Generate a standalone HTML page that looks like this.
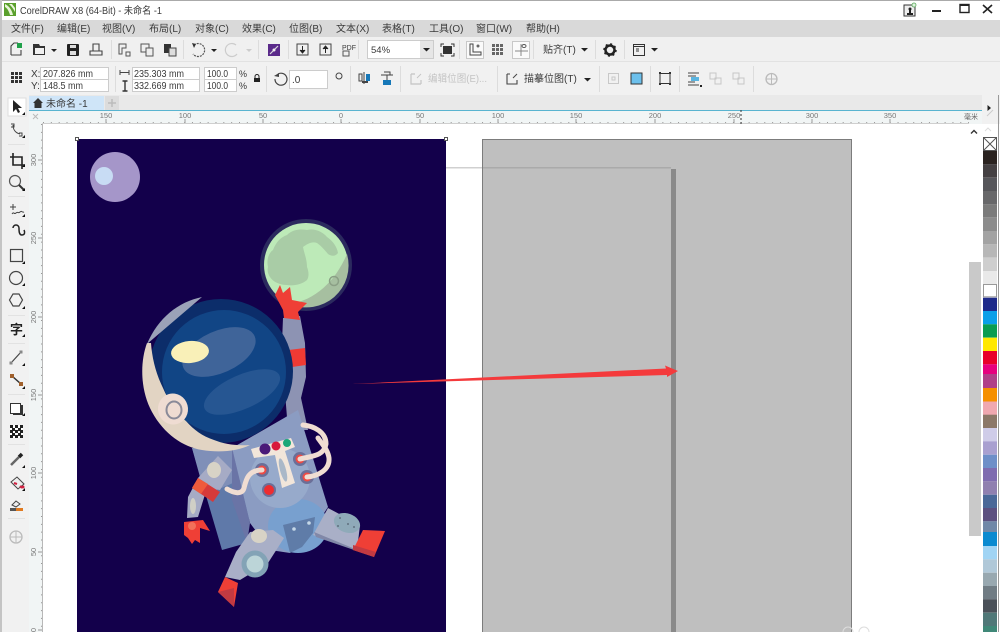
<!DOCTYPE html>
<html><head><meta charset="utf-8"><style>
html,body{margin:0;padding:0;background:#fff;width:1000px;height:632px;overflow:hidden}
svg{display:block;filter:blur(.35px)}
text{font-family:"Liberation Sans","Noto Sans CJK SC",sans-serif;fill:#3a3a3a}
</style></head><body>
<svg width="1000" height="632" viewBox="0 0 1000 632" xmlns="http://www.w3.org/2000/svg">
<rect width="1000" height="632" fill="#fff"/>
<!-- chrome -->
<rect x="0" y="0" width="1000" height="1" fill="#aaa"/>
<rect x="0" y="0" width="2" height="632" fill="#c4c4c4"/>
<rect x="2" y="20" width="998" height="17" fill="#d9d9d9"/>
<rect x="2" y="37" width="998" height="24" fill="#f0f0f0"/>
<rect x="2" y="61" width="998" height="1" fill="#e2e2e2"/>
<rect x="2" y="62" width="998" height="33" fill="#f1f1f1"/>
<rect x="2" y="95" width="998" height="15" fill="#e9e9e9"/>
<rect x="2" y="95" width="27" height="537" fill="#f1f1f1"/>
<!-- logo -->
<rect x="4" y="3" width="12" height="13" fill="#5aa02c"/>
<path d="M5 4 C9 6 12 10 13 15 L10 15 C9 11 7 8 5 7Z M9 4 C11 6 13 8 15 12 L15 8 L12 4Z" fill="#e8f4d8"/>
<text x="20" y="14" font-size="10" textLength="142" lengthAdjust="spacingAndGlyphs">CorelDRAW X8 (64-Bit) - 未命名 -1</text>
<!-- window controls -->
<rect x="904" y="5" width="11" height="11" fill="#eee" stroke="#333"/>
<path d="M907 14h6M910 14v-4" stroke="#222" stroke-width="2"/><circle cx="910" cy="9" r="1.500" fill="#222"/><circle cx="914" cy="5" r="2" fill="#dff3df" stroke="#5aa85a" stroke-width=".8"/>
<rect x="932" y="10" width="9" height="2" fill="#222"/>
<rect x="960" y="4.500" width="9" height="8" fill="none" stroke="#222" stroke-width="1.400"/><rect x="960" y="4" width="9" height="2" fill="#222"/>
<path d="M983 5L992 13M992 5L983 13" stroke="#222" stroke-width="1.600"/>
<!-- menu -->
<g font-size="10">
<text x="11" y="32">文件(F)</text><text x="57" y="32">编辑(E)</text><text x="102" y="32">视图(V)</text><text x="149" y="32">布局(L)</text><text x="195" y="32">对象(C)</text><text x="242" y="32">效果(C)</text><text x="289" y="32">位图(B)</text><text x="336" y="32">文本(X)</text><text x="382" y="32">表格(T)</text><text x="429" y="32">工具(O)</text><text x="476" y="32">窗口(W)</text><text x="526" y="32">帮助(H)</text>
</g>
<!-- toolbar 1 separators -->
<g fill="#dcdcdc"><rect x="111" y="40" width="1" height="19"/><rect x="183" y="40" width="1" height="19"/><rect x="258" y="40" width="1" height="19"/><rect x="288" y="40" width="1" height="19"/><rect x="358" y="40" width="1" height="19"/><rect x="459" y="40" width="1" height="19"/><rect x="533" y="40" width="1" height="19"/><rect x="595" y="40" width="1" height="19"/><rect x="624" y="40" width="1" height="19"/></g>
<!-- new -->
<path d="M11 55V46l3-3h4M11 55h10v-5" fill="none" stroke="#444" stroke-width="1.100"/><rect x="17" y="43" width="5" height="5" fill="#1fa14a"/>
<!-- open -->
<path d="M33 55V44h6l1 2h5v9Z" fill="#333"/><rect x="35" y="48" width="9" height="6" fill="#f0f0f0"/>
<path d="M51 49h6l-3 3Z" fill="#222"/>
<!-- save -->
<rect x="67" y="44" width="12" height="12" rx="1" fill="#222"/><rect x="70" y="45" width="6" height="3" fill="#ddd"/><rect x="70" y="51" width="6" height="4" fill="#ddd"/>
<!-- print -->
<path d="M90 55v-4h12v4ZM93 51v-7h6v7" fill="none" stroke="#444" stroke-width="1.100"/>
<!-- cut copy paste -->
<path d="M119 44h7v4h-4v6h-3Z" fill="none" stroke="#555"/><rect x="126" y="52" width="4" height="4" fill="none" stroke="#555"/>
<rect x="141" y="44" width="8" height="8" fill="none" stroke="#555"/><rect x="146" y="48" width="7" height="8" fill="#eee" stroke="#555"/>
<rect x="164" y="44" width="7" height="9" fill="#333"/><rect x="169" y="48" width="7" height="8" fill="#ddd" stroke="#444"/>
<!-- undo redo -->
<path d="M194 45a6.500 6.500 0 1 1 -1 9" fill="none" stroke="#555" stroke-dasharray="2 1" stroke-width="1.200"/><path d="M192 43l4 1-2 4Z" fill="#333"/>
<path d="M211 49h6l-3 3Z" fill="#222"/>
<path d="M236 45a6.500 6.500 0 1 0 1 9" fill="none" stroke="#ccc" stroke-width="1.200"/><path d="M246 49h6l-3 3Z" fill="#ccc"/>
<!-- connect -->
<rect x="268" y="44" width="12" height="12" fill="#5a2a8a"/><path d="M270 54l8-8" stroke="#ddd" stroke-width="1.200"/><circle cx="274" cy="50" r="1.500" fill="#eee"/>
<!-- import/export/pdf -->
<rect x="297" y="44" width="11" height="11" fill="none" stroke="#444"/><path d="M302.500 46v5M300 50l2.500 3 2.500-3" fill="#222" stroke="#222"/>
<rect x="320" y="44" width="11" height="11" fill="none" stroke="#444"/><path d="M325.500 53v-5M323 49l2.500-3 2.500 3" fill="#222" stroke="#222"/>
<text x="342" y="50" font-size="7">PDF</text><rect x="343" y="51" width="6" height="5" fill="none" stroke="#555"/>
<!-- zoom combo -->
<rect x="367.500" y="40.500" width="66" height="18" fill="#fff" stroke="#ccc"/><rect x="420" y="41" width="13" height="17" fill="#e6e6e6"/><path d="M423 48h7l-3.500 3.500Z" fill="#222"/>
<text x="371" y="53" font-size="9.500">54%</text>
<rect x="443" y="46" width="9" height="8" fill="#333"/><path d="M441 47v-3h3M451 44h3v3M454 53v3h-3M444 56h-3v-3" fill="none" stroke="#333"/>
<!-- layout buttons -->
<rect x="466.500" y="41.500" width="17" height="17" fill="#fafafa" stroke="#c8c8c8"/><path d="M470 44v11h11v-3h-8v-8Z" fill="none" stroke="#444"/><circle cx="478" cy="46" r="1.500" fill="#666"/>
<g fill="#666"><rect x="492" y="44" width="3" height="3"/><rect x="496" y="44" width="3" height="3"/><rect x="500" y="44" width="3" height="3"/><rect x="492" y="48" width="3" height="3"/><rect x="496" y="48" width="3" height="3"/><rect x="500" y="48" width="3" height="3"/><rect x="492" y="52" width="3" height="3"/><rect x="496" y="52" width="3" height="3"/><rect x="500" y="52" width="3" height="3"/></g>
<rect x="512.500" y="41.500" width="17" height="17" fill="#fafafa" stroke="#c8c8c8"/><path d="M515 51h13M521 44v12" stroke="#888"/><ellipse cx="524" cy="46" rx="2" ry="1.500" fill="none" stroke="#555"/>
<text x="543" y="53" font-size="10">贴齐(T)</text>
<path d="M581 48h7l-3.500 3.500Z" fill="#222"/>
<!-- gear -->
<circle cx="610" cy="50" r="4.500" fill="none" stroke="#222" stroke-width="2.500"/><circle cx="610" cy="50" r="6" fill="none" stroke="#222" stroke-width="1.500" stroke-dasharray="2 2.700"/>
<rect x="633.500" y="44.500" width="11" height="11" fill="none" stroke="#333"/><path d="M634 46.500h10M636 49h3M636 51h3" stroke="#333"/>
<path d="M651 48h7l-3.500 3.500Z" fill="#222"/>
<!-- row 2 -->
<g fill="#333"><rect x="11" y="72" width="3" height="3"/><rect x="15" y="72" width="3" height="3"/><rect x="19" y="72" width="3" height="3"/><rect x="11" y="76" width="3" height="3"/><rect x="15" y="76" width="3" height="3"/><rect x="19" y="76" width="3" height="3"/><rect x="11" y="80" width="3" height="3"/><rect x="15" y="80" width="3" height="3"/><rect x="19" y="80" width="3" height="3"/></g>
<g fill="#fff" stroke="#ccc"><rect x="40.500" y="67.500" width="68" height="12"/><rect x="40.500" y="79.500" width="68" height="12"/><rect x="132.500" y="67.500" width="67" height="12"/><rect x="132.500" y="79.500" width="67" height="12"/><rect x="204.500" y="67.500" width="32" height="12"/><rect x="204.500" y="79.500" width="32" height="12"/><rect x="289.500" y="70.500" width="38" height="18"/></g>
<g font-size="10">
<text x="31" y="77">X:</text><text x="31" y="89">Y:</text>
<text x="43" y="77" textLength="50" lengthAdjust="spacingAndGlyphs">207.826 mm</text><text x="43" y="89" textLength="40" lengthAdjust="spacingAndGlyphs">148.5 mm</text>
<text x="134" y="77" textLength="50" lengthAdjust="spacingAndGlyphs">235.303 mm</text><text x="134" y="89" textLength="50" lengthAdjust="spacingAndGlyphs">332.669 mm</text>
<text x="207" y="77" textLength="21" lengthAdjust="spacingAndGlyphs">100.0</text><text x="207" y="89" textLength="21" lengthAdjust="spacingAndGlyphs">100.0</text>
<text x="239" y="77" font-size="9">%</text><text x="239" y="89" font-size="9">%</text>
<text x="292" y="83" font-size="10">.0</text>
</g>
<path d="M120 72.500h9M120 70v5M129 70v5" stroke="#444" fill="none"/>
<path d="M125 81v10M122.500 81h5M122.500 91h5" stroke="#333" stroke-width="1.400" fill="none"/>
<rect x="254" y="78" width="6" height="4" fill="#222"/><path d="M255 78v-1.500a2 2 0 0 1 4 0V78" fill="none" stroke="#222"/>
<path d="M278 74a6 6 0 1 1 -3 5" fill="none" stroke="#444" stroke-width="1.200"/><path d="M274 76l5-3v4Z" fill="#444"/>
<circle cx="339" cy="76" r="3" fill="none" stroke="#444"/>
<g fill="#dcdcdc"><rect x="350" y="66" width="1" height="26"/><rect x="400" y="66" width="1" height="26"/><rect x="497" y="66" width="1" height="26"/><rect x="599" y="66" width="1" height="26"/><rect x="650" y="66" width="1" height="26"/><rect x="679" y="66" width="1" height="26"/><rect x="753" y="66" width="1" height="26"/><rect x="115" y="66" width="1" height="26"/><rect x="266" y="66" width="1" height="26"/></g>
<!-- mirror -->
<path d="M359 74h3v7h-3ZM364 72v12" fill="none" stroke="#444"/><rect x="366" y="74" width="4" height="7" fill="#1778b8"/><rect x="362" y="81" width="6" height="2" fill="#444"/>
<path d="M381 75h12M384 72h6v3M387 75v10" fill="none" stroke="#444"/><rect x="383" y="80" width="8" height="5" fill="#1778b8"/>
<!-- edit bitmap greyed -->
<path d="M411 74v10h10M411 74h4M421 80v4" fill="none" stroke="#c4c4c4" stroke-width="1.200"/><path d="M417 78l4-4" stroke="#c4c4c4"/>
<text x="428" y="82" font-size="10" style="fill:#c4c4c4" textLength="59" lengthAdjust="spacingAndGlyphs">编辑位图(E)...</text>
<!-- trace -->
<path d="M507 74v10h10v-4M507 74h3" fill="none" stroke="#444" stroke-width="1.100"/><path d="M513 78l4-4" stroke="#444"/>
<text x="524" y="82" font-size="10">描摹位图(T)</text>
<path d="M584 78h7l-3.500 3.500Z" fill="#222"/>
<rect x="608.500" y="73.500" width="10" height="10" fill="none" stroke="#c8c8c8"/><rect x="612" y="77" width="3" height="3" fill="none" stroke="#c8c8c8"/>
<rect x="631" y="73" width="11" height="11" fill="#6cc0ec" stroke="#333"/>
<rect x="660" y="73.500" width="10" height="10" fill="none" stroke="#333"/><g fill="#333"><rect x="659" y="72" width="2" height="2"/><rect x="669" y="72" width="2" height="2"/><rect x="659" y="83" width="2" height="2"/><rect x="669" y="83" width="2" height="2"/></g>
<path d="M688 73h11M688 76h8M688 85h11M688 82h7" stroke="#444"/><rect x="691" y="77" width="8" height="4" fill="#5ab4e0"/><rect x="700" y="85" width="2" height="2" fill="#222"/>
<g fill="none" stroke="#c6c6c6"><rect x="710" y="73" width="6" height="6"/><rect x="715" y="78" width="6" height="6"/><rect x="733" y="73" width="6" height="6"/><rect x="738" y="78" width="6" height="6"/></g>
<circle cx="771.500" cy="79" r="5.500" fill="none" stroke="#bbb" stroke-width="1.300"/><path d="M771.500 74v10M766.500 79h10" stroke="#bbb"/>
<!-- tab -->
<rect x="29" y="96" width="75" height="14" fill="#cfe5f8"/>
<path d="M33 103l5-5 5 5h-1.500v5h-7v-5Z" fill="#333"/>
<text x="46" y="107" font-size="10">未命名 -1</text>
<rect x="105" y="96" width="14" height="14" fill="#dcdcdc"/><path d="M112 99v8M108 103h8" stroke="#bbb" stroke-width="1.500"/>
<rect x="29" y="110" width="953" height="1" fill="#58b4d0"/>
<!-- rulers -->
<rect x="29" y="111" width="953" height="13" fill="#f1f5f5"/>
<rect x="29" y="111" width="13" height="521" fill="#f1f5f5"/>
<rect x="42" y="123" width="927" height="1" fill="#cfcfcf"/>
<rect x="42" y="124" width="1" height="508" fill="#b8b8b8"/>
<path d="M43 122.500H969" stroke="#999" stroke-dasharray="1 6.840"/>
<path d="M41.500 124V632" stroke="#999" stroke-dasharray="1 6.840"/>
<path d="M33 114l5 5M33 119l5-5" stroke="#bbb"/>
<g font-size="7.500" text-anchor="middle">
<text x="106" y="118" style="fill:#777">150</text><text x="185" y="118" style="fill:#777">100</text><text x="263" y="118" style="fill:#777">50</text><text x="341" y="118" style="fill:#777">0</text><text x="420" y="118" style="fill:#777">50</text><text x="498" y="118" style="fill:#777">100</text><text x="576" y="118" style="fill:#777">150</text><text x="655" y="118" style="fill:#777">200</text><text x="734" y="118" style="fill:#777">250</text><text x="812" y="118" style="fill:#777">300</text><text x="890" y="118" style="fill:#777">350</text>
<text x="971" y="119" style="fill:#666" font-size="7">毫米</text>
</g>
<path d="M106 119v4M185 119v4M263 119v4M341 119v4M420 119v4M498 119v4M576 119v4M655 119v4M734 119v4M812 119v4M890 119v4" stroke="#999"/>
<path d="M741 110v14" stroke="#333" stroke-dasharray="2 2"/>
<g font-size="7.500" text-anchor="middle">
<text transform="translate(36,160) rotate(-90)" style="fill:#777">300</text><text transform="translate(36,238) rotate(-90)" style="fill:#777">250</text><text transform="translate(36,317) rotate(-90)" style="fill:#777">200</text><text transform="translate(36,395) rotate(-90)" style="fill:#777">150</text><text transform="translate(36,473) rotate(-90)" style="fill:#777">100</text><text transform="translate(36,552) rotate(-90)" style="fill:#777">50</text><text transform="translate(36,630) rotate(-90)" style="fill:#777">0</text>
</g>
<path d="M38 160h4M38 238h4M38 317h4M38 395h4M38 473h4M38 552h4M38 630h4" stroke="#999"/>
<!-- left tools -->
<rect x="8" y="98" width="18" height="18" fill="#fff" stroke="#ddd"/>
<path d="M13 100l0 12 3-3 2 4 2-1-2-4 4 0Z" fill="#222"/>
<path d="M13 125c0 5 3 8 7 9M11 124h3v3h-3M19 133h3v3h-3" fill="none" stroke="#444"/>
<path d="M13 153v12h12M10 157h12v12" fill="none" stroke="#222" stroke-width="1.600"/>
<circle cx="15" cy="181" r="5.500" fill="none" stroke="#555" stroke-width="1.200"/><path d="M19 185l5 5" stroke="#333" stroke-width="2"/>
<path d="M13 204v6M10 207h6" stroke="#444"/><path d="M12 214c2-3 2 1 4-1s2 1 4-1 2 1 4 0" fill="none" stroke="#444"/>
<path d="M13 232a3 3 0 0 1 6 0c0 3 0 7 3 7s3-3 2-5" fill="none" stroke="#222" stroke-width="1.500" transform="translate(0,-4)"/>
<rect x="10.500" y="249.500" width="12" height="12" fill="none" stroke="#444" stroke-width="1.200"/>
<circle cx="16" cy="278" r="6.500" fill="none" stroke="#444" stroke-width="1.200"/>
<path d="M13 294h6l3.500 6-3.500 6h-6l-3.500-6Z" fill="none" stroke="#444" stroke-width="1.200"/>
<text x="10" y="334" font-size="13" font-weight="bold" style="fill:#222">字</text>
<path d="M11 363l10-11" stroke="#444" stroke-width="1.200"/><rect x="9.500" y="361.500" width="3" height="3" fill="#888"/><rect x="19.500" y="350.500" width="3" height="3" fill="#888"/>
<path d="M12 376l9 8" stroke="#333" stroke-width="1.500"/><rect x="10" y="374" width="4" height="4" fill="#a0602c"/><rect x="19" y="382" width="4" height="4" fill="#a0602c"/>
<rect x="10.500" y="403.500" width="10" height="10" fill="#fff" stroke="#333"/><path d="M21 405h2v10h-10v-1.500h8Z" fill="#333"/>
<rect x="10" y="425" width="13" height="13" fill="#fff"/>
<g fill="#222"><rect x="10" y="425" width="3" height="3"/><rect x="15" y="425" width="3" height="3"/><rect x="20" y="425" width="3" height="3"/><rect x="12" y="428" width="3" height="3"/><rect x="18" y="428" width="3" height="3"/><rect x="10" y="430" width="3" height="3"/><rect x="15" y="430" width="3" height="3"/><rect x="20" y="430" width="3" height="3"/><rect x="12" y="433" width="3" height="3"/><rect x="18" y="433" width="3" height="3"/><rect x="10" y="435" width="3" height="3"/><rect x="15" y="435" width="3" height="3"/><rect x="20" y="435" width="3" height="3"/></g>
<path d="M11 465l8-8" stroke="#666" stroke-width="2.500"/><path d="M19 457l3-3" stroke="#222" stroke-width="3.500"/>
<path d="M11 482l6-5 7 7-6 5Z" fill="#eee" stroke="#444"/><path d="M14 483l3 1M20 486l2 2" stroke="#d02040" stroke-width="2"/><circle cx="23" cy="487" r="1.500" fill="#d02040"/>
<path d="M12 505l4-4 4 3-4 3Z" fill="#eee" stroke="#444"/><rect x="10" y="508" width="13" height="3" fill="#e07a20"/><rect x="10" y="508" width="6" height="3" fill="#555"/>
<circle cx="16" cy="537" r="6" fill="none" stroke="#bbb" stroke-width="1.300"/><path d="M16 531v12M10 537h12" stroke="#bbb"/>
<g fill="#111"><path d="M25 115h-3l3-3Z"/><path d="M25 138h-3l3-3Z"/><path d="M25 167h-3l3-3Z"/><path d="M25 191h-3l3-3Z"/><path d="M25 217h-3l3-3Z"/><path d="M25 264h-3l3-3Z"/><path d="M25 286h-3l3-3Z"/><path d="M25 309h-3l3-3Z"/><path d="M25 337h-3l3-3Z"/><path d="M25 366h-3l3-3Z"/><path d="M25 389h-3l3-3Z"/><path d="M25 416h-3l3-3Z"/><path d="M25 468h-3l3-3Z"/><path d="M25 491h-3l3-3Z"/></g>
<g fill="#e2e2e2"><rect x="8" y="144" width="17" height="1"/><rect x="8" y="196" width="17" height="1"/><rect x="8" y="315" width="17" height="1"/><rect x="8" y="343" width="17" height="1"/><rect x="8" y="394" width="17" height="1"/><rect x="8" y="444" width="17" height="1"/><rect x="8" y="518" width="17" height="1"/></g>
<!-- page artwork -->
<rect x="77" y="139" width="369" height="493" fill="#13004b"/>
<rect x="446" y="167" width="37" height="1.500" fill="#d0d0d0"/>
<rect x="482.500" y="139.500" width="369" height="493" fill="#bfbfbf" stroke="#7c7c7c"/>
<rect x="483" y="167" width="188" height="1.500" fill="#aaa"/>
<rect x="671" y="169" width="5" height="463" fill="#8a8a8a"/>
<rect x="75.500" y="137.500" width="3" height="3" fill="#fff" stroke="#555"/><rect x="444.500" y="137.500" width="3" height="3" fill="#fff" stroke="#555"/>
<!-- small planet -->
<circle cx="115" cy="177" r="25" fill="#a596c9"/><circle cx="104" cy="176" r="9" fill="#c8dcf4"/>
<!-- moon -->
<circle cx="306" cy="265" r="46" fill="#2b2a5e"/>
<circle cx="306" cy="265" r="42" fill="#bdeab8"/>
<path d="M347 254A42 42 0 0 1 290 304C315 300 335 282 347 254Z" fill="#a6bfa0"/>
<path d="M268 267C266 258 270 252 273 250C276 242 281 237 287 235C293 229 301 229 307 230C315 228 323 232 327 237C333 241 337 247 338 253C335 257 331 256 328 254C324 249 320 245 317 243C312 241 307 244 303 247C304 253 307 259 307 267C309 272 309 277 307 280C301 285 293 286 287 285C280 285 273 282 270 277C268 274 267 271 268 267Z" fill="#a9cca6"/>
<circle cx="334" cy="281" r="4.500" fill="none" stroke="#8ba086" stroke-width="1.500"/>
<!-- back arm raised -->
<path d="M283 318L300 316L305 343L306 377L301 398L308 430H288L284 380L282 343Z" fill="#8d93b3"/>
<path d="M288.500 350L305 348L306 365L292 367Z" fill="#ef3a34"/>
<path d="M275 295L280 285L283 293L290 287L292 300L307 303L298 312L300 320L284 318L283 310Z" fill="#ef3f36"/>
<!-- body -->
<path d="M192 448L232 448L250 510L247 543L222 550Z" fill="#5f79a9"/>
<path d="M192 448L232 448L240 480L205 495Z" fill="#7f8fb8"/>
<path d="M232 448L298 410L328 507L313 530L290 553L270 550L250 523Z" fill="#8b9cc2"/>
<path d="M232 448L250 523L247 543L232 500Z" fill="#6a74a6"/>
<ellipse cx="298" cy="526" rx="30" ry="27" fill="#78a0cf"/>
<circle cx="280" cy="478" r="30" fill="#97aacb"/>
<path d="M283 525L315 517L313 533L302 547L290 553Z" fill="#5f7ca8"/><circle cx="294" cy="529" r="1.800" fill="#c5d8e8"/><circle cx="309" cy="523" r="1.800" fill="#c5d8e8"/>
<!-- panel -->
<path d="M251 449L291 438L295 447L285 451L295 483L282 488L275 455L254 458Z" fill="#f2e6da"/>
<ellipse cx="283" cy="470" rx="3" ry="12" fill="#aab8c8" transform="rotate(-15 283 470)"/>
<circle cx="265" cy="449" r="5.500" fill="#4a1a78"/><circle cx="276" cy="446" r="4.500" fill="#d8183c"/><circle cx="287" cy="443" r="4" fill="#1aa878"/>
<!-- connectors -->
<circle cx="300" cy="459" r="7" fill="#6b6f98"/><circle cx="300" cy="459" r="4.500" fill="#ee4a44"/><circle cx="307" cy="477" r="7" fill="#6b6f98"/><circle cx="307" cy="477" r="4.500" fill="#ee4a44"/><circle cx="262" cy="470" r="7" fill="#6b6f98"/><circle cx="262" cy="470" r="4.500" fill="#ee4a44"/><circle cx="269" cy="490" r="7" fill="#6b6f98"/><circle cx="269" cy="490" r="5" fill="#ee2c30"/>
<g fill="none" stroke="#f0ddd2" stroke-width="5" stroke-linecap="round"><path d="M262 470C248 470 246 480 244 488S232 492 227 489"/><path d="M300 459C312 456 324 456 326 444C326 432 314 426 303 425"/><path d="M307 477C318 476 330 470 329 458C328 450 322 444 318 438"/></g>
<!-- left arm -->
<path d="M218 456L232 470L220 490L207 488L198 517L187 518L188 497L198 478Z" fill="#a6abc5"/>
<ellipse cx="214" cy="470" rx="7" ry="8" fill="#d8d3c6"/><ellipse cx="193" cy="506" rx="3" ry="8" fill="#d0cfc6"/>
<path d="M198 478L220 492L213 502L192 488Z" fill="#d63a3a"/><path d="M198 478L208 484L201 494L192 488Z" fill="#ef5a3c"/>
<path d="M184 522L203 520L210 531L200 528L200 543L195 540L192 544L188 538L184 535Z" fill="#ef3f36"/><circle cx="192" cy="526" r="4" fill="#f2705a"/>
<!-- right leg -->
<path d="M328 508L360 525L357 550L313 535Z" fill="#a9afc7"/><path d="M314 532L355 549L357 551L316 537Z" fill="#8188a8"/>
<ellipse cx="347" cy="523" rx="13.500" ry="9.500" fill="#8faab9" transform="rotate(20 347 523)"/>
<circle cx="340" cy="518" r="1" fill="#607080"/><circle cx="348" cy="524" r="1" fill="#607080"/><circle cx="354" cy="527" r="1" fill="#607080"/><circle cx="338" cy="526" r="1" fill="#607080"/>
<path d="M363 530L385 531L374 557L353 550Z" fill="#ef3f36"/><path d="M353 545L376 552L374 557L353 550Z" fill="#c23a42"/>
<!-- left leg -->
<path d="M250 532L273 530L284 538L268 563L240 580L225 577L236 552Z" fill="#a9afc7"/>
<ellipse cx="259" cy="536" rx="8" ry="7" fill="#d8d3c6"/>
<circle cx="255" cy="564" r="13.500" fill="#83a3b6"/><circle cx="255" cy="564" r="8.500" fill="#bcd5d8"/>
<path d="M225 577L238 583L234 607L218 592Z" fill="#ef3f36"/><path d="M218 592L234 588L234 607Z" fill="#c23a42"/>
<!-- helmet -->
<circle cx="221" cy="371" r="72" fill="#0c2d6a"/>
<path d="M147 343C140 362 140 390 152 412C164 434 183 447 202 450C220 453 238 451 250 445C236 446 224 444 214 440C202 436 194 430 186 421C176 411 168 400 163 388C156 374 152 358 151 343Z" fill="#e2d4c3"/>
<path d="M147 344C158 318 178 302 202 297Z" fill="#9ba2b8"/>
<circle cx="224" cy="372" r="62" fill="#114585"/>
<ellipse cx="219" cy="352" rx="39" ry="21" fill="#3f6499" transform="rotate(-24 219 352)"/>
<ellipse cx="242" cy="392" rx="41" ry="17" fill="#265692" transform="rotate(-24 242 392)"/>
<ellipse cx="190" cy="352" rx="19" ry="11" fill="#f9f0b8" transform="rotate(-5 190 352)"/>
<ellipse cx="173" cy="409" rx="15" ry="15.500" fill="#efdcd2" transform="rotate(-15 173 409)"/>
<ellipse cx="174" cy="410" rx="7.500" ry="8.500" fill="none" stroke="#8a8a98" stroke-width="2"/>
<!-- arrow -->
<path d="M352 384L666 368.500L665 365.500L678 371L667 377L667 375Z" fill="#f43a3c"/>
<!-- right side: scrollbar and palette -->
<rect x="969" y="262" width="12" height="274" fill="#c9c9c9"/>
<rect x="982" y="95" width="18" height="29" fill="#f1f1f1"/>
<rect x="982" y="124" width="18" height="508" fill="#fff"/>
<rect x="998" y="95" width="1" height="537" fill="#999"/>
<path d="M987.500 105l3.500 3-3.500 3Z" fill="#222"/>
<path d="M971 133.500l3-3 3 3" fill="none" stroke="#333" stroke-width="1.400"/>
<path d="M987 116l6-6" stroke="#ccc"/>
<path d="M985 131l3-3 3 3" fill="none" stroke="#ddd"/>
<rect x="983.500" y="137.500" width="13" height="13" fill="#fff" stroke="#555"/><path d="M984 138l12 12M996 138l-12 12" stroke="#555"/>
<g>
<rect x="983" y="151" width="14" height="13.330" fill="#2a2320"/><rect x="983" y="164.300" width="14" height="13.330" fill="#444042"/><rect x="983" y="177.700" width="14" height="13.330" fill="#56565a"/><rect x="983" y="191" width="14" height="13.330" fill="#68686a"/><rect x="983" y="204.300" width="14" height="13.330" fill="#7b7b7b"/><rect x="983" y="217.700" width="14" height="13.330" fill="#8c8c8c"/><rect x="983" y="231" width="14" height="13.330" fill="#a3a3a3"/><rect x="983" y="244.300" width="14" height="13.330" fill="#b7b7b7"/><rect x="983" y="257.700" width="14" height="13.330" fill="#cecece"/><rect x="983" y="271" width="14" height="13.330" fill="#e9e9e9"/><rect x="983.500" y="284.500" width="13" height="12.330" fill="#fff" stroke="#999"/><rect x="983" y="297.700" width="14" height="13.330" fill="#1e2a8a"/><rect x="983" y="311" width="14" height="13.330" fill="#0a9fe8"/><rect x="983" y="324.300" width="14" height="13.330" fill="#0a9c50"/><rect x="983" y="337.700" width="14" height="13.330" fill="#ffe800"/><rect x="983" y="351" width="14" height="13.330" fill="#e8002a"/><rect x="983" y="364.300" width="14" height="13.330" fill="#e6007e"/><rect x="983" y="374" width="14" height="14" fill="#b04088"/><rect x="983" y="388" width="14" height="13.500" fill="#f59000"/><rect x="983" y="401.500" width="14" height="13.500" fill="#f0a8b0"/><rect x="983" y="414.700" width="14" height="13.500" fill="#8c7868"/><rect x="983" y="428" width="14" height="13.330" fill="#cfcce8"/><rect x="983" y="441.300" width="14" height="13.330" fill="#a9a0d0"/><rect x="983" y="454.700" width="14" height="13.330" fill="#6e8fc8"/><rect x="983" y="468" width="14" height="13.330" fill="#7f6cb0"/><rect x="983" y="481.300" width="14" height="13.330" fill="#9080b0"/><rect x="983" y="494.700" width="14" height="13.330" fill="#4a6898"/><rect x="983" y="508" width="14" height="13.330" fill="#5c5080"/><rect x="983" y="521.300" width="14" height="13.330" fill="#7088a8"/><rect x="983" y="532" width="14" height="14" fill="#0a8ad0"/><rect x="983" y="546" width="14" height="13.330" fill="#a0d4f4"/><rect x="983" y="559.300" width="14" height="13.330" fill="#b0c8d8"/><rect x="983" y="572.700" width="14" height="13.330" fill="#98a8b0"/><rect x="983" y="586" width="14" height="13.330" fill="#707c84"/><rect x="983" y="599.300" width="14" height="13.330" fill="#4a5058"/><rect x="983" y="612.700" width="14" height="13.330" fill="#507878"/><rect x="983" y="626" width="14" height="6" fill="#408878"/>
</g>
<circle cx="848" cy="632" r="5" fill="none" stroke="#ddd"/><circle cx="864" cy="632" r="5" fill="none" stroke="#ddd"/>
</svg>
</body></html>
